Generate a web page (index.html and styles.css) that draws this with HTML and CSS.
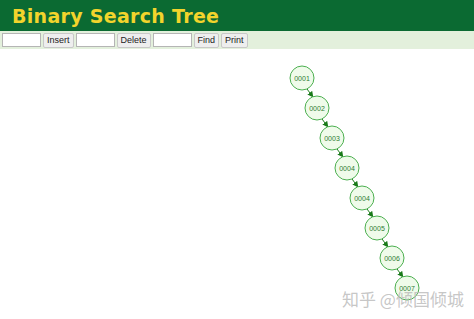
FILE: index.html
```html
<!DOCTYPE html>
<html lang="en">
<head>
    <meta charset="UTF-8">
    <title>Binary Search Tree</title>
    <link rel="stylesheet" href="styles.css">
</head>
<body>
    <div class="header">
        <h1>Binary Search Tree</h1>
    </div>
    <div class="toolbar">
        <input type="text">
        <button>Insert</button>
        <input type="text">
        <button>Delete</button>
        <input type="text">
        <button>Find</button>
        <button>Print</button>
    </div>

    <div class="canvas">
        <svg width="474" height="270" viewBox="0 49 474 270">
            <defs>
                <marker id="arrow" viewBox="0 0 10 10" refX="9" refY="5" markerWidth="6" markerHeight="6" orient="auto">
                    <path d="M0,0 L10,5 L0,10 z" fill="#1a7a1a"/>
                </marker>
            </defs>
            <g class="edges">
                <line x1="307" y1="89" x2="313" y2="97" marker-end="url(#arrow)"/>
                <line x1="322" y1="119" x2="328" y2="127" marker-end="url(#arrow)"/>
                <line x1="337" y1="149" x2="343" y2="157" marker-end="url(#arrow)"/>
                <line x1="352" y1="179" x2="358" y2="187" marker-end="url(#arrow)"/>
                <line x1="367" y1="209" x2="373" y2="217" marker-end="url(#arrow)"/>
                <line x1="382" y1="239" x2="388" y2="247" marker-end="url(#arrow)"/>
                <line x1="397" y1="269" x2="403" y2="277" marker-end="url(#arrow)"/>
            </g>
            <g class="nodes">
                <circle cx="302" cy="78" r="12"/><text x="302" y="80.5">0001</text>
                <circle cx="317" cy="108" r="12"/><text x="317" y="110.5">0002</text>
                <circle cx="332" cy="138" r="12"/><text x="332" y="140.5">0003</text>
                <circle cx="347" cy="168" r="12"/><text x="347" y="170.5">0004</text>
                <circle cx="362" cy="198" r="12"/><text x="362" y="200.5">0004</text>
                <circle cx="377" cy="228" r="12"/><text x="377" y="230.5">0005</text>
                <circle cx="392" cy="258" r="12"/><text x="392" y="260.5">0006</text>
                <circle cx="407" cy="288" r="12"/><text x="407" y="290.5">0007</text>
            </g>
            <text class="watermark" x="342" y="306">知乎 @倾国倾城</text>
        </svg>
    </div>
</body>
</html>
```

FILE: styles.css
```css
body {
    margin: 0;
    font-family: "Liberation Sans", Arial, sans-serif;
    background-color: white;
    overflow: hidden;
}
.header {
    background-color: #0b6a32;
    height: 31px;
    display: flex;
    align-items: center;
    padding-left: 12px;
}
.header h1 {
    margin: 0;
    color: #f2d42c;
    font-family: "DejaVu Sans", Verdana, sans-serif;
    font-size: 19px;
    font-weight: bold;
    letter-spacing: 0.3px;
}
.toolbar {
    background-color: #e3f0dc;
    height: 18px;
    display: flex;
    align-items: center;
    gap: 2px;
    padding-left: 2px;
}
.toolbar input {
    width: 39px;
    height: 14px;
    padding: 0;
    margin: 0;
    border: 1px solid #b5b5b5;
    background: white;
    box-sizing: border-box;
}
.toolbar button {
    height: 15px;
    padding: 0 3px;
    margin: 0;
    font-family: "Liberation Sans", Arial, sans-serif;
    font-size: 9px;
    color: #222;
    background-color: #eeeeee;
    border: 1px solid #c8c8c8;
    border-radius: 2px;
}
.canvas {
    display: block;
}
.canvas svg {
    display: block;
}
.edges line {
    stroke: #1a7a1a;
    stroke-width: 1;
}
.nodes circle {
    fill: #effbea;
    stroke: #4caf50;
    stroke-width: 1;
}
.nodes text {
    font-family: "Liberation Sans", Arial, sans-serif;
    font-size: 7px;
    fill: #2e7d32;
    text-anchor: middle;
}
.watermark {
    font-family: "Noto Sans CJK SC", sans-serif;
    font-size: 17px;
    fill: #b8b8b8;
    fill-opacity: 0.8;
}
```
